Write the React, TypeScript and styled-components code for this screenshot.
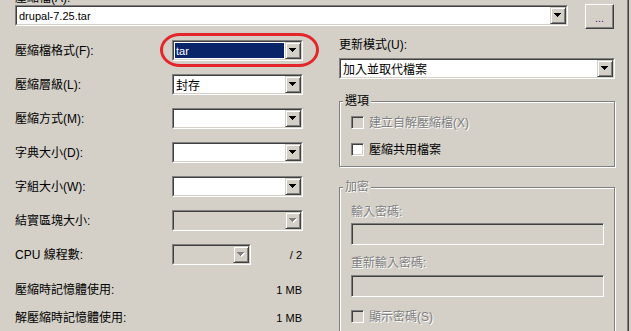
import { createGlobalStyle, styled } from 'styled-components';

const GlobalStyle = createGlobalStyle`
  html, body {
    margin: 0;
    padding: 0;
    background: #d4d0c8;
    overflow: hidden;
  }
  body {
    font-family: 'Liberation Sans', 'Noto Sans CJK TC', sans-serif;
    font-size: 12px;
    color: #000;
  }
`;

const Window = styled.div`
  display: flex;
  width: 631px;
  height: 331px;
  overflow: hidden;
`;

const Main = styled.div`
  flex: 1;
  box-sizing: border-box;
  padding-left: 15px;
`;

const Edge = styled.div`
  box-sizing: border-box;
  width: 4px;
  border-left: 1px solid #808080;
  box-shadow: inset 1px 0 0 #404040;
`;

const CutLabel = styled.div`
  margin-top: -8px;
  height: 12px;
  line-height: 12px;
`;

const FileRow = styled.div`
  display: flex;
  align-items: flex-start;
  height: 25px;
`;

const Columns = styled.div`
  display: flex;
  margin-top: 11px;
`;

const LeftCol = styled.div`
  width: 288px;
  flex-shrink: 0;
  display: flex;
  flex-direction: column;
`;

const RightCol = styled.div`
  width: 276px;
  margin-left: 36px;
  flex-shrink: 0;
`;

const Text = styled.span<{ $disabled?: boolean; $small?: boolean }>`
  line-height: 12px;
  white-space: nowrap;
  font-size: ${({ $small }) => ($small ? '11px' : '12px')};
  color: ${({ $disabled }) => ($disabled ? '#808080' : '#000')};
  text-shadow: ${({ $disabled }) => ($disabled ? '1px 1px 0 #fff' : 'none')};
`;

/* combo box */
const ComboFrame = styled.div<{ $w: number; $top?: number }>`
  box-sizing: border-box;
  width: ${({ $w }) => $w}px;
  height: 21px;
  margin-top: ${({ $top }) => $top ?? 0}px;
  flex-shrink: 0;
  border: 1px solid;
  border-color: #808080 #fff #fff #808080;
`;

const ComboInner = styled.div<{ $disabled?: boolean }>`
  box-sizing: border-box;
  display: flex;
  height: 100%;
  border: 1px solid;
  border-color: #404040 #d4d0c8 #d4d0c8 #404040;
  background: ${({ $disabled }) => ($disabled ? '#d4d0c8' : '#fff')};
`;

const ComboValue = styled.div<{ $selected?: boolean; $small?: boolean }>`
  flex: 1;
  display: flex;
  align-items: center;
  margin: 1px;
  padding-left: 1px;
  white-space: nowrap;
  overflow: hidden;
  font-size: ${({ $small }) => ($small ? '11px' : '12px')};
  background: ${({ $selected }) => ($selected ? '#0a246a' : 'transparent')};
  color: ${({ $selected }) => ($selected ? '#fff' : '#000')};
`;

const DropButton = styled.div`
  box-sizing: border-box;
  width: 16px;
  flex-shrink: 0;
  display: flex;
  align-items: center;
  justify-content: center;
  background: #d4d0c8;
  border: 1px solid;
  border-color: #d4d0c8 #404040 #404040 #d4d0c8;
  box-shadow: inset 1px 1px 0 #fff, inset -1px -1px 0 #808080;
`;

const arrowPath = 'M0 0h7v1H0zM1 1h5v1H1zM2 2h3v1H2zM3 3h1v1H3z';

const Arrow = ({ disabled }: { disabled?: boolean }) => (
  <svg width="8" height="5" viewBox="0 0 8 5" shapeRendering="crispEdges">
    {disabled && <path d={arrowPath} fill="#fff" transform="translate(1 1)" />}
    <path d={arrowPath} fill={disabled ? '#808080' : '#000'} />
  </svg>
);

interface ComboProps {
  width: number;
  value?: string;
  selected?: boolean;
  disabled?: boolean;
  small?: boolean;
  top?: number;
}

const Combo = ({ width, value, selected, disabled, small, top }: ComboProps) => (
  <ComboFrame $w={width} $top={top}>
    <ComboInner $disabled={disabled}>
      <ComboValue $selected={selected} $small={small}>
        {value}
      </ComboValue>
      <DropButton>
        <Arrow disabled={disabled} />
      </DropButton>
    </ComboInner>
  </ComboFrame>
);

const Browse = styled.button`
  box-sizing: border-box;
  width: 29px;
  height: 25px;
  margin: 0 0 0 17px;
  padding: 0 0 4px;
  background: #d4d0c8;
  border: 1px solid;
  border-color: #fff #404040 #404040 #fff;
  box-shadow: inset -1px -1px 0 #808080;
  font-family: inherit;
  font-size: 11px;
  color: #5a1070;
  display: flex;
  align-items: flex-end;
  justify-content: center;
`;

/* annotation drawn over the format combo */
const Marked = styled.div`
  position: relative;

  &::after {
    content: '';
    position: absolute;
    left: -12px;
    right: -16px;
    top: -7px;
    bottom: -6px;
    border: 3px solid #e3262b;
    border-radius: 20px / 17px;
    pointer-events: none;
  }
`;

const FieldRow = styled.div`
  display: flex;
  align-items: center;
  height: 21px;
  margin-bottom: 13px;
`;

const FieldLabel = styled.div`
  width: 157px;
  flex-shrink: 0;
  line-height: 12px;
  white-space: nowrap;
`;

const Suffix = styled.div`
  flex: 1;
  text-align: right;
  font-size: 11px;
  padding-right: 1px;
`;

const InfoRow = styled.div<{ $top: number }>`
  display: flex;
  justify-content: space-between;
  height: 12px;
  line-height: 12px;
  margin-top: ${({ $top }) => $top}px;
  padding-right: 1px;
`;

const RightLabel = styled.div`
  margin-top: -1px;
  line-height: 12px;
  height: 12px;
`;

const Group = styled.fieldset<{ $top: number }>`
  margin: ${({ $top }) => $top}px 0 0;
  min-width: 0;
  box-sizing: border-box;
  width: 276px;
  border: 1px solid #808080;
  box-shadow: inset 1px 1px 0 #fff, 1px 1px 0 #fff;
  padding: 0 10px 10px 11px;
`;

const GroupTitle = styled.legend<{ $disabled?: boolean }>`
  margin-left: -8px;
  padding: 0 2px;
  line-height: 12px;
  height: 12px;
  background: #d4d0c8;
  color: ${({ $disabled }) => ($disabled ? '#808080' : '#000')};
  text-shadow: ${({ $disabled }) => ($disabled ? '1px 1px 0 #fff' : 'none')};
`;

const CheckRow = styled.div<{ $top: number }>`
  display: flex;
  align-items: center;
  gap: 5px;
  height: 13px;
  margin-top: ${({ $top }) => $top}px;
`;

const CheckBox = styled.span<{ $disabled?: boolean }>`
  box-sizing: border-box;
  width: 13px;
  height: 13px;
  flex-shrink: 0;
  border: 1px solid;
  border-color: #808080 #fff #fff #808080;
  box-shadow: inset 1px 1px 0 #404040, inset -1px -1px 0 #d4d0c8;
  background: ${({ $disabled }) => ($disabled ? '#d4d0c8' : '#fff')};
`;

const SubLabel = styled.div<{ $top: number }>`
  margin-top: ${({ $top }) => $top}px;
  height: 12px;
  line-height: 12px;
`;

const Field = styled.div<{ $top: number }>`
  box-sizing: border-box;
  width: 253px;
  height: 22px;
  margin-top: ${({ $top }) => $top}px;
  border: 1px solid;
  border-color: #808080 #fff #fff #808080;
  box-shadow: inset 1px 1px 0 #404040, inset -1px -1px 0 #d4d0c8;
  background: #d4d0c8;
`;

const fields = [
  { label: '壓縮層級(L):', value: '封存' },
  { label: '壓縮方式(M):' },
  { label: '字典大小(D):' },
  { label: '字組大小(W):' },
];

export default function App() {
  return (
    <>
      <GlobalStyle />
      <Window>
        <Main>
          <CutLabel>壓縮檔(A):</CutLabel>
          <FileRow>
            <Combo width={553} value="drupal-7.25.tar" small top={1} />
            <Browse>...</Browse>
          </FileRow>
          <Columns>
            <LeftCol>
              <FieldRow>
                <FieldLabel>壓縮檔格式(F):</FieldLabel>
                <Marked>
                  <Combo width={131} value="tar" selected small />
                </Marked>
              </FieldRow>
              {fields.map((f) => (
                <FieldRow key={f.label}>
                  <FieldLabel>{f.label}</FieldLabel>
                  <Combo width={131} value={f.value} />
                </FieldRow>
              ))}
              <FieldRow>
                <FieldLabel>結實區塊大小:</FieldLabel>
                <Combo width={131} disabled />
              </FieldRow>
              <FieldRow>
                <FieldLabel>CPU 線程數:</FieldLabel>
                <Combo width={79} disabled />
                <Suffix>/ 2</Suffix>
              </FieldRow>
              <InfoRow $top={6}>
                <span>壓縮時記憶體使用:</span>
                <Text $small>1 MB</Text>
              </InfoRow>
              <InfoRow $top={16}>
                <span>解壓縮時記憶體使用:</span>
                <Text $small>1 MB</Text>
              </InfoRow>
            </LeftCol>
            <RightCol>
              <RightLabel>更新模式(U):</RightLabel>
              <Combo width={276} value="加入並取代檔案" top={7} />
              <Group $top={16}>
                <GroupTitle>選項</GroupTitle>
                <CheckRow $top={9}>
                  <CheckBox $disabled />
                  <Text $disabled>建立自解壓縮檔(X)</Text>
                </CheckRow>
                <CheckRow $top={14}>
                  <CheckBox />
                  <Text>壓縮共用檔案</Text>
                </CheckRow>
              </Group>
              <Group $top={14}>
                <GroupTitle $disabled>加密</GroupTitle>
                <SubLabel $top={13}>
                  <Text $disabled>輸入密碼:</Text>
                </SubLabel>
                <Field $top={5} />
                <SubLabel $top={12}>
                  <Text $disabled>重新輸入密碼:</Text>
                </SubLabel>
                <Field $top={6} />
                <CheckRow $top={13}>
                  <CheckBox $disabled />
                  <Text $disabled>顯示密碼(S)</Text>
                </CheckRow>
              </Group>
            </RightCol>
          </Columns>
        </Main>
        <Edge />
      </Window>
    </>
  );
}
